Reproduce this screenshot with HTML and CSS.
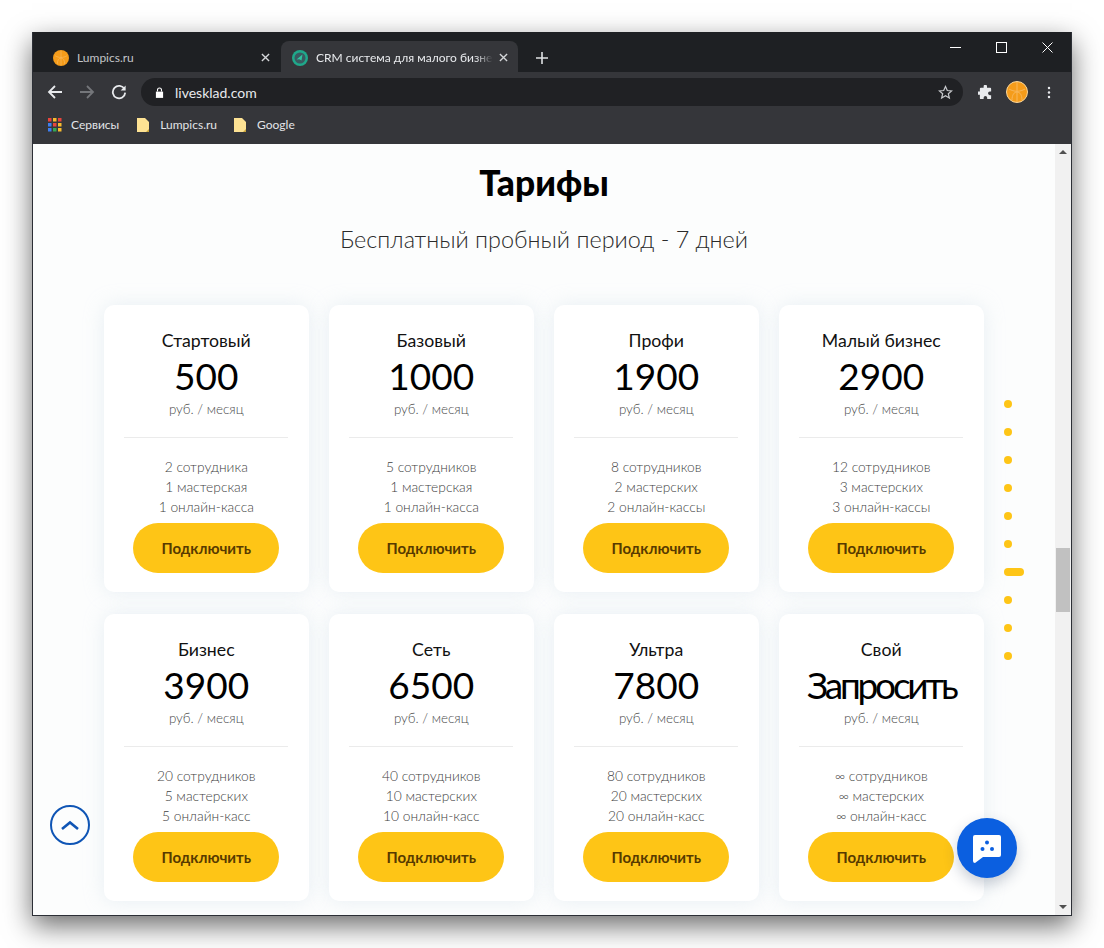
FILE: index.html
```html
<!DOCTYPE html>
<html lang="ru">
<head>
<meta charset="utf-8">
<title>Тарифы</title>
<link rel="stylesheet" href="styles.css">
</head>
<body>
<div class="window">
  <div class="titlebar">
    <div class="tab">
      <svg class="fav-crm" viewBox="0 0 22 22"><circle cx="11" cy="11" r="11" fill="#f59c1a"/><path d="M11 1v20M3 8c5 3 11 3 16 0M6 19c0-5 2-8 5-8s5 3 5 8" fill="none" stroke="#f8b75a" stroke-width="1"/></svg>
      <span class="tab-title">Lumpics.ru</span>
      <svg class="tab-x" viewBox="0 0 10 10"><path d="M1 1l8 8M9 1l-8 8"/></svg>
    </div>
    <div class="tab tab-active">
      <svg class="fav-crm" viewBox="0 0 16 16"><circle cx="8" cy="8" r="8" fill="#1fa88a"/><circle cx="8" cy="8" r="5.500" fill="#3a5a60"/><path d="M4.500 9.500l6-5-1 6-2.200-1.200z" fill="#2fc4a0"/></svg>
      <span class="tab-title tab-fade">CRM система для малого бизне</span>
      <svg class="tab-x" viewBox="0 0 10 10"><path d="M1 1l8 8M9 1l-8 8"/></svg>
    </div>
    <svg class="new-tab" viewBox="0 0 12 12"><path d="M6 0v12M0 6h12"/></svg>
    <div class="win-controls">
      <svg viewBox="0 0 11 11"><path d="M0 5.500h11"/></svg>
      <svg viewBox="0 0 11 11"><rect x=".5" y=".5" width="10" height="10"/></svg>
      <svg viewBox="0 0 11 11"><path d="M.5 .5l10 10M10.500 .5l-10 10"/></svg>
    </div>
  </div>
  <div class="toolbar">
    <svg class="nav" viewBox="0 0 16 16"><path d="M15 8H2M8 2L2 8l6 6"/></svg>
    <svg class="nav nav-off" viewBox="0 0 16 16"><path d="M1 8h13M8 2l6 6-6 6"/></svg>
    <svg class="nav" viewBox="0 0 16 16"><path d="M13.500 5.200A6.200 6.200 0 1 0 14.200 8.600"/><path class="fill" d="M14.600 1.400v5h-5z"/></svg>
    <div class="omnibox">
      <svg class="lock" viewBox="0 0 10 12"><path d="M1 5h8v7H1z" fill="#fff"/><path d="M2.800 5V3.200a2.200 2.200 0 0 1 4.400 0V5" fill="none" stroke="#fff" stroke-width="1.200"/></svg>
      <span class="url">livesklad.com</span>
      <svg class="star" viewBox="0 0 16 16"><path d="M8 1.600l1.900 4.300 4.600.4-3.500 3 1.100 4.600L8 11.500l-4.100 2.400L5 9.300l-3.500-3 4.600-.4z"/></svg>
    </div>
    <svg class="puzzle" viewBox="0 0 16 16"><path d="M6 1.500a1.800 1.800 0 0 1 3.600 0V3H13a1 1 0 0 1 1 1v3h-1.400a1.900 1.900 0 0 0 0 3.800H14V14a1 1 0 0 1-1 1H9.800v-1.300a1.900 1.900 0 0 0-3.800 0V15H3a1 1 0 0 1-1-1v-3.500H.8a1.800 1.800 0 0 1 0-3.600H2V4a1 1 0 0 1 1-1h3z"/></svg>
    <svg class="avatar" viewBox="0 0 22 22"><circle cx="11" cy="11" r="10.500" fill="#f59c1a" stroke="#fbd79a"/><path d="M11 1v20M3 8c5 3 11 3 16 0M6 19c0-5 2-8 5-8s5 3 5 8" fill="none" stroke="#f8b75a" stroke-width="1"/></svg>
    <svg class="kebab" viewBox="0 0 4 16"><circle cx="2" cy="2.500" r="1.500"/><circle cx="2" cy="8" r="1.500"/><circle cx="2" cy="13.500" r="1.500"/></svg>
  </div>
  <div class="bookmarks">
    <div class="bm">
      <svg class="apps" viewBox="0 0 14 14">
        <rect x="0" y="0" width="3.500" height="3.500" fill="#e8453c"/><rect x="5" y="0" width="3.500" height="3.500" fill="#f9bb2d"/><rect x="10" y="0" width="3.500" height="3.500" fill="#e8453c"/>
        <rect x="0" y="5" width="3.500" height="3.500" fill="#3d7ff1"/><rect x="5" y="5" width="3.500" height="3.500" fill="#e8453c"/><rect x="10" y="5" width="3.500" height="3.500" fill="#f9bb2d"/>
        <rect x="0" y="10" width="3.500" height="3.500" fill="#3d7ff1"/><rect x="5" y="10" width="3.500" height="3.500" fill="#34a853"/><rect x="10" y="10" width="3.500" height="3.500" fill="#f9bb2d"/>
      </svg>
      <span>Сервисы</span>
    </div>
    <div class="bm bm-folder"><svg class="folder" viewBox="0 0 12 14"><path d="M0 0h8l4 4v10H0z" fill="#fde293"/><path d="M9 14l3-3v3z" fill="#c9a53a"/></svg><span>Lumpics.ru</span></div>
    <div class="bm bm-folder"><svg class="folder" viewBox="0 0 12 14"><path d="M0 0h8l4 4v10H0z" fill="#fde293"/><path d="M9 14l3-3v3z" fill="#c9a53a"/></svg><span>Google</span></div>
  </div>
  <div class="viewport">
    <main class="page">
      <h1 class="heading">Тарифы</h1>
      <p class="subheading">Бесплатный пробный период - 7 дней</p>
      <div class="plans">
        <article class="card"><h2>Стартовый</h2><div class="price">500</div><div class="unit">руб. / месяц</div><hr><ul><li>2 сотрудника</li><li>1 мастерская</li><li>1 онлайн-касса</li></ul><a class="btn">Подключить</a></article>
        <article class="card"><h2>Базовый</h2><div class="price">1000</div><div class="unit">руб. / месяц</div><hr><ul><li>5 сотрудников</li><li>1 мастерская</li><li>1 онлайн-касса</li></ul><a class="btn">Подключить</a></article>
        <article class="card"><h2>Профи</h2><div class="price">1900</div><div class="unit">руб. / месяц</div><hr><ul><li>8 сотрудников</li><li>2 мастерских</li><li>2 онлайн-кассы</li></ul><a class="btn">Подключить</a></article>
        <article class="card"><h2>Малый бизнес</h2><div class="price">2900</div><div class="unit">руб. / месяц</div><hr><ul><li>12 сотрудников</li><li>3 мастерских</li><li>3 онлайн-кассы</li></ul><a class="btn">Подключить</a></article>
        <article class="card"><h2>Бизнес</h2><div class="price">3900</div><div class="unit">руб. / месяц</div><hr><ul><li>20 сотрудников</li><li>5 мастерских</li><li>5 онлайн-касс</li></ul><a class="btn">Подключить</a></article>
        <article class="card"><h2>Сеть</h2><div class="price">6500</div><div class="unit">руб. / месяц</div><hr><ul><li>40 сотрудников</li><li>10 мастерских</li><li>10 онлайн-касс</li></ul><a class="btn">Подключить</a></article>
        <article class="card"><h2>Ультра</h2><div class="price">7800</div><div class="unit">руб. / месяц</div><hr><ul><li>80 сотрудников</li><li>20 мастерских</li><li>20 онлайн-касс</li></ul><a class="btn">Подключить</a></article>
        <article class="card"><h2>Свой</h2><div class="price price-text">Запросить</div><div class="unit">руб. / месяц</div><hr><ul><li>∞ сотрудников</li><li>∞ мастерских</li><li>∞ онлайн-касс</li></ul><a class="btn">Подключить</a></article>
      </div>
    </main>
    <div class="scrollbar">
      <span class="arrow-up"></span>
      <span class="thumb"></span>
      <span class="arrow-down"></span>
    </div>
    <nav class="dots">
      <i></i><i></i><i></i><i></i><i></i><i></i><i class="on"></i><i></i><i></i><i></i>
    </nav>
    <svg class="to-top" viewBox="0 0 40 40"><circle cx="20" cy="20" r="19"/><path d="M12 24l8-6.500 8 6.500"/></svg>
    <div class="chat">
      <svg viewBox="0 0 32 32"><path d="M4 3h24a2 2 0 0 1 2 2v18a2 2 0 0 1-2 2H12l-8 6a2 2 0 0 1-2-2V5a2 2 0 0 1 2-2z" fill="#fff"/><circle cx="16" cy="10.500" r="2" fill="#0b5fe0"/><circle cx="11.500" cy="17" r="2" fill="#0b5fe0"/><circle cx="21" cy="17" r="2" fill="#0b5fe0"/></svg>
    </div>
  </div>
</div>
</body>
</html>
```
FILE: styles.css
```css
* { box-sizing: border-box; }
html, body { height: 100%; }
body {
  margin: 0;
  padding: 32px 0 0 32px;
  background: #fff;
  font-family: "Lato", "Noto Sans", sans-serif;
  overflow: hidden;
}
.window {
  width: 1040px;
  height: 884px;
  display: flex;
  flex-direction: column;
  border: 1px solid #2c2f36;
  border-top: 0;
  box-shadow: 0 10px 26px rgba(0,0,0,.58);
  background: #fff;
}
.titlebar {
  height: 40px;
  flex: none;
  background: #1e2023;
  display: flex;
  align-items: flex-end;
  padding-left: 7px;
  position: relative;
}
.tab {
  width: 241px;
  height: 31px;
  display: flex;
  align-items: center;
  padding: 2px 11px 0 13px;
  color: #c3c5c8;
  font-size: 12px;
}
.tab-active {
  width: 237px;
  background: #35363a;
  color: #e8eaed;
  border-radius: 8px 8px 0 0;
  padding: 2px 10px 0 11px;
}
.fav-crm { width: 16px; height: 16px; flex: none; margin-right: 8px; }
.tab-title {
  flex: 1;
  white-space: nowrap;
}
.tab-fade {
  -webkit-mask-image: linear-gradient(90deg, #000 90%, transparent);
  mask-image: linear-gradient(90deg, #000 90%, transparent);
}
.tab-x { width: 9px; height: 9px; flex: none; margin-left: 6px; stroke: #d5d7da; stroke-width: 1.500; fill: none; }
.new-tab { width: 12px; height: 12px; margin: 0 0 8px 18px; stroke: #dfe1e4; stroke-width: 1.600; fill: none; flex: none; }
.win-controls {
  position: absolute;
  top: 10px;
  right: 18px;
  display: flex;
  gap: 35px;
}
.win-controls svg { width: 11px; height: 11px; stroke: #fff; stroke-width: 1; fill: none; display: block; }
.toolbar {
  height: 40px;
  flex: none;
  background: #35363a;
  display: flex;
  align-items: center;
  padding: 0 15px 0 14px;
}
.nav { width: 16px; height: 16px; stroke: #e8eaed; stroke-width: 1.800; fill: none; flex: none; margin-right: 16px; }
.nav-off { stroke: #74767a; }
.nav .fill { fill: #e8eaed; stroke: none; }
.omnibox {
  width: 822px;
  height: 28px;
  margin-left: -2px;
  background: #202124;
  border-radius: 14px;
  display: flex;
  align-items: center;
  padding: 0 10px 0 14px;
}
.lock { width: 9px; height: 11px; flex: none; }
.url { flex: 1; color: #e8eaed; font-size: 14px; margin-left: 11px; }
.star { width: 15px; height: 15px; fill: none; stroke: #c7c9cc; stroke-width: 1.300; }
.puzzle { width: 15px; height: 15px; fill: #e8eaed; margin-left: 15px; flex: none; }
.avatar {
  width: 22px;
  height: 22px;
  margin-left: 13px;
  flex: none;
}
.kebab { width: 4px; height: 13px; fill: #e8eaed; margin-left: 19px; flex: none; }
.bookmarks {
  height: 32px;
  flex: none;
  background: #35363a;
  display: flex;
  align-items: center;
  padding: 0 0 7px 15px;
  color: #e3e5e8;
  font-size: 12px;
  gap: 18px;
}
.bm { display: flex; align-items: center; gap: 9px; }
.bm-folder { gap: 11px; margin-right: -1px; }
.apps { width: 14px; height: 14px; }
.folder { width: 12px; height: 14px; display: block; }
.viewport {
  flex: 1;
  min-height: 0;
  display: flex;
  position: relative;
  background: #fcfdfd;
}
.page {
  flex: 1;
  min-width: 0;
  overflow: hidden;
  padding: 0 71px;
}
.heading {
  margin: 19px 0 0;
  height: 40px;
  line-height: 40px;
  font-size: 35.400px;
  font-weight: 900;
  text-align: center;
  color: #000;
}
.subheading {
  margin: 16px 0 0;
  height: 40px;
  line-height: 40px;
  font-size: 23.400px;
  font-weight: 300;
  text-align: center;
  color: #2b2b2b;
}
.plans {
  margin-top: 46px;
  display: grid;
  grid-template-columns: repeat(4, 204.500px);
  column-gap: 20.500px;
  row-gap: 22px;
}
.card {
  height: 287px;
  background: #fff;
  border-radius: 10px;
  box-shadow: 0 0 20px rgba(200,215,230,.38);
  padding-top: 26px;
  text-align: center;
  display: flex;
  flex-direction: column;
  align-items: center;
}
.card h2 {
  margin: 0;
  font-size: 17.700px;
  line-height: 20px;
  font-weight: 400;
  color: #111;
}
.price {
  font-size: 37px;
  font-weight: 400;
  line-height: 44px;
  margin-top: 3px;
  color: #000;
}
.price-text { letter-spacing: -3.200px; }
.unit {
  font-size: 13.400px;
  font-weight: 300;
  line-height: 18px;
  margin-top: 2px;
  color: #4a4a4a;
}
.card hr {
  width: 164px;
  height: 1px;
  margin: 19px 0 0;
  border: 0;
  background: #ebebeb;
}
.card ul {
  list-style: none;
  margin: 19px 0 0;
  padding: 0;
  font-size: 13.800px;
  font-weight: 300;
  line-height: 20px;
  color: #3f3f3f;
}
.btn {
  width: 146px;
  height: 50px;
  margin-top: 6px;
  border-radius: 25px;
  background: #fec516;
  color: #573a00;
  font-size: 15px;
  font-weight: 700;
  line-height: 50px;
}
.scrollbar {
  width: 16px;
  flex: none;
  background: #f1f1f1;
  position: relative;
}
.thumb {
  position: absolute;
  left: 1px;
  right: 1px;
  top: 404px;
  height: 64px;
  background: #c1c1c1;
}
.arrow-up, .arrow-down {
  position: absolute;
  left: 4px;
  width: 0;
  height: 0;
  border-left: 4px solid transparent;
  border-right: 4px solid transparent;
}
.arrow-up { top: 6px; border-bottom: 4px solid #505050; }
.arrow-down { bottom: 6px; border-top: 4px solid #505050; }
.dots {
  position: absolute;
  left: 971px;
  top: 256px;
  display: flex;
  flex-direction: column;
  align-items: flex-start;
  gap: 20px;
}
.dots i { width: 8px; height: 8px; border-radius: 4px; background: #fec516; display: block; }
.dots i.on { width: 20px; }
.to-top {
  position: absolute;
  left: 17px;
  top: 661px;
  width: 40px;
  height: 40px;
  fill: none;
  stroke: #0f55b5;
  stroke-width: 2;
}
.to-top path { stroke-width: 2.600; }
.chat {
  position: absolute;
  left: 924px;
  top: 674px;
  width: 60px;
  height: 60px;
  border-radius: 50%;
  background: #0b5fe0;
  box-shadow: 0 6px 14px rgba(40,60,90,.25);
  display: flex;
  align-items: center;
  justify-content: center;
}
.chat svg { width: 32px; height: 32px; }
```
